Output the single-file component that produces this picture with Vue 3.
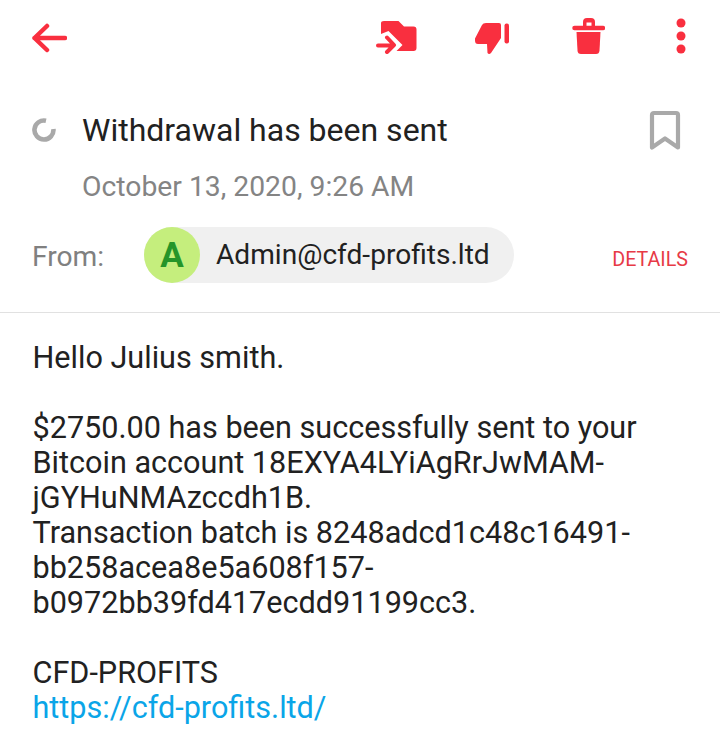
<script setup>
const bodyLines = [
  'Hello Julius smith.',
  '',
  '$2750.00 has been successfully sent to your',
  'Bitcoin account 18EXYA4LYiAgRrJwMAM-',
  'jGYHuNMAzccdh1B.',
  'Transaction batch is 8248adcd1c48c16491-',
  'bb258acea8e5a608f157-',
  'b0972bb39fd417ecdd91199cc3.',
  '',
  'CFD-PROFITS'
]
</script>

<template>
  <div class="page">
    <header class="toolbar">
      <svg class="ic-back" width="36" height="30" viewBox="0 0 36 30" fill="none" stroke="#f92f3f" stroke-width="4.500" stroke-linecap="round" stroke-linejoin="round">
        <path d="M3.500 15H34M16 3L3.500 15L16 27" />
      </svg>
      <div class="actions">
        <svg class="ic-folder" width="41" height="34" viewBox="0 0 41 34">
          <path fill="#f92f3f" d="M5 3Q5 1 8 1H22.500L28 6.500H37.500Q40.500 6.500 40.500 9.500V28Q40.500 31 37.500 31H20.500L26.500 25L12.500 11L5 14Z" />
          <path fill="none" stroke="#f92f3f" stroke-width="4" stroke-linecap="round" stroke-linejoin="round" d="M2 25.500H17M11 17.500L18 25L11 32" />
        </svg>
        <svg class="ic-thumb" width="36" height="33" viewBox="0 0 36 33">
          <path fill="#f92f3f" d="M12 1H25Q27 1 27 3V16L17 31Q15 33 13.500 31L13 22H4Q1 22 1 18.500V16.500L8 3Q9 1 12 1Z" />
          <rect x="30.500" y="1.500" width="4.500" height="20" rx="2" fill="#f92f3f" />
        </svg>
        <svg class="ic-trash" width="33" height="38" viewBox="0 0 33 38">
          <path fill="#f92f3f" fill-rule="evenodd" d="M11 9V5Q11 1 15 1H19Q23 1 23 5V9ZM14.500 5.500V9H19.500V5.500Z" />
          <path fill="none" stroke="#f92f3f" stroke-width="4.500" stroke-linecap="round" d="M2.500 11H31" />
          <path fill="#f92f3f" d="M4.500 15H28.500L27.500 33.500Q27.300 37 24 37H9Q5.700 37 5.500 33.500Z" />
        </svg>
        <svg class="ic-more" width="10" height="36" viewBox="0 0 10 36">
          <circle cx="5" cy="5" r="4.500" fill="#f92f3f" />
          <circle cx="5" cy="18" r="4.500" fill="#f92f3f" />
          <circle cx="5" cy="31" r="4.500" fill="#f92f3f" />
        </svg>
      </div>
    </header>

    <section class="subject">
      <svg class="ic-spin" width="24" height="24" viewBox="0 0 24 24" fill="none" stroke="#a9a9a9" stroke-width="4.600">
        <path d="M21.400 11A9.500 9.500 0 1 1 14 2.700" />
      </svg>
      <h1 class="title">Withdrawal has been sent</h1>
      <svg class="ic-mark" width="32" height="41" viewBox="0 0 32 41" fill="none" stroke="#a9a9a9" stroke-width="4.200" stroke-linejoin="round">
        <path d="M5 3H27Q29 3 29 5V37.500L16 28.500L3 37.500V5Q3 3 5 3Z" />
      </svg>
    </section>

    <div class="date">October 13, 2020, 9:26 AM</div>

    <section class="from">
      <span class="from-label">From:</span>
      <div class="chip">
        <span class="avatar">A</span>
        <span class="address">Admin@cfd-profits.ltd</span>
      </div>
      <span class="details">DETAILS</span>
    </section>

    <main class="body">
      <div v-for="(line, i) in bodyLines" :key="i" class="line">{{ line }}</div>
      <a class="link">https://cfd-profits.ltd/</a>
    </main>
  </div>
</template>

<style scoped>
.page {
  width: 720px;
  height: 736px;
  overflow: hidden;
  background: #fff;
  font-family: Roboto, "Liberation Sans", sans-serif;
  color: #212121;
}
.toolbar {
  display: flex;
  justify-content: space-between;
  align-items: flex-start;
  height: 109px;
  padding: 17px 34px 0 31px;
  box-sizing: border-box;
}
.ic-back {
  margin-top: 6px;
}
.actions {
  display: flex;
  align-items: flex-start;
}
.ic-folder {
  margin-top: 3px;
  margin-left: 0;
}
.ic-thumb {
  margin-top: 5px;
  margin-left: 57px;
}
.ic-trash {
  margin-left: 62px;
}
.ic-more {
  margin-top: 1px;
  margin-left: 71px;
}
.subject {
  display: flex;
  align-items: center;
  height: 42px;
  padding-left: 32px;
  padding-right: 39px;
}
.title {
  flex: 1;
  margin: 0 0 0 26px;
  font-size: 32px;
  font-weight: 400;
  line-height: 42px;
}
.date {
  margin: 16px 0 0 82px;
  font-size: 28.300px;
  line-height: 40px;
  color: #848484;
}
.from {
  display: flex;
  align-items: center;
  height: 56px;
  margin-top: 20px;
  padding: 0 32px;
}
.from-label {
  width: 112px;
  padding-top: 3px;
  font-size: 28.200px;
  color: #808080;
}
.chip {
  display: flex;
  align-items: center;
  width: 370px;
  height: 56px;
  border-radius: 28px;
  background: #f0f0f0;
}
.avatar {
  display: flex;
  align-items: center;
  justify-content: center;
  width: 56px;
  height: 56px;
  border-radius: 50%;
  background: #c5ee7d;
  color: #259529;
  font-size: 35px;
  font-weight: 700;
}
.address {
  margin-left: 16px;
  padding-bottom: 2px;
  font-size: 28.100px;
}
.details {
  margin-left: auto;
  margin-top: 8px;
  font-size: 19.700px;
  color: #e73a46;
}
.body {
  margin-top: 29px;
  padding: 27px 32.500px 0;
  border-top: 1px solid #e1e1e1;
  font-size: 30.600px;
  line-height: 35px;
}
.line {
  min-height: 35px;
  white-space: nowrap;
}
.link {
  color: #0aa5e8;
}
</style>
